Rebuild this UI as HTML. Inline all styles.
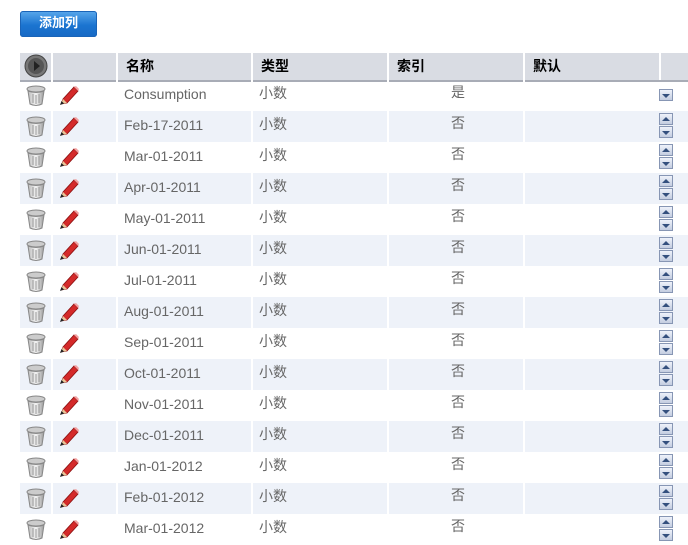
<!DOCTYPE html><html><head><meta charset="utf-8"><style>
body{margin:0;width:688px;height:545px;background:#fff;font-family:"Liberation Sans","Noto Sans CJK SC",sans-serif;position:relative;overflow:hidden}
.btn{position:absolute;left:20px;top:11px;width:77px;height:26px;border-radius:3px;background:linear-gradient(#5aa8ec,#1b74d0 55%,#1769c4);color:#fff;font-weight:bold;font-size:13px;text-align:center;line-height:24px;box-shadow:inset 0 0 0 1px #1a64b8}
.row{position:absolute;left:20px;width:668px;height:31px}
.c{position:absolute;top:0;height:100%;border-left:2px solid #fff;box-sizing:border-box;font-size:14px;color:#666;line-height:18px}
.hd{background:#d9dce3;border-bottom:2px solid #a8acb6;height:27px}
.hd .c{color:#000;font-weight:bold;padding:4px 0 0 8px}
.alt{background:#eef2f9}
.t{padding:5px 0 0 6px}
.ar{position:absolute;left:639px;width:14px;height:12px;background:linear-gradient(#eef2fa,#c4cde0);border:1px solid #8796b4;box-sizing:border-box}
.ar:after{content:"";position:absolute;left:2px;border-left:4px solid transparent;border-right:4px solid transparent}
.up:after{top:3px;border-bottom:4px solid #34507e}
.dn:after{top:4px;border-top:4px solid #34507e}
</style></head><body>
<div class="btn">添加列</div>
<div class="row hd" style="top:53px">
<div class="c" style="left:0;width:31px;border:none"><svg width="26" height="26" style="position:absolute;left:3px;top:0"><circle cx="13" cy="13" r="11" fill="#777" stroke="#444"/><circle cx="13" cy="13" r="8" fill="#555"/><path d="M11 8 L17 13 L11 18Z" fill="#222"/></svg></div>
<div class="c" style="left:31px;width:65px"></div>
<div class="c" style="left:96px;width:135px">名称</div>
<div class="c" style="left:231px;width:136px">类型</div>
<div class="c" style="left:367px;width:136px">索引</div>
<div class="c" style="left:503px;width:136px">默认</div>
<div class="c" style="left:639px;width:29px"></div>
</div>
<div id="rows"></div>
<script>
var n=["Consumption","Feb-17-2011","Mar-01-2011","Apr-01-2011","May-01-2011","Jun-01-2011","Jul-01-2011","Aug-01-2011","Sep-01-2011","Oct-01-2011","Nov-01-2011","Dec-01-2011","Jan-01-2012","Feb-01-2012","Mar-01-2012"];
var h="";
for(var i=0;i<15;i++){var y=80+i*31;
h+='<div class="row'+(i%2?' alt':'')+'" style="top:'+y+'px">'+
'<div class="c" style="left:0;width:31px;border:none"><svg width="22" height="24" style="position:absolute;left:5px;top:4px"><defs><linearGradient id="g'+i+'" x1="0" x2="1"><stop offset="0" stop-color="#bbb"/><stop offset=".5" stop-color="#f4f4f4"/><stop offset="1" stop-color="#999"/></linearGradient></defs><ellipse cx="11" cy="5" rx="9" ry="3" fill="#ccc" stroke="#888"/><path d="M3 7 L5 20 Q11 23 17 20 L19 7 Q11 10 3 7Z" fill="url(#g'+i+')" stroke="#888"/><path d="M8 10V19M11 11V20M14 10V19" stroke="#999"/></svg></div>'+
'<div class="c" style="left:31px;width:65px"><svg width="24" height="24" style="position:absolute;left:4px;top:4px"><path d="M4 20 L6 15 L17 3 L21 7 L10 19Z" fill="#d42a2a" stroke="#8a1010" stroke-width=".8"/><path d="M17 3 L21 7 L22 5 L19 2Z" fill="#f3a0a0"/><path d="M4 20 L6 15 L10 19Z" fill="#e8c89a"/><path d="M3 21 L4.5 17 L7 19.5Z" fill="#222"/></svg></div>'+
'<div class="c t" style="left:96px;width:135px">'+n[i]+'</div>'+
'<div class="c t" style="left:231px;width:136px;padding-top:4px">小数</div>'+
'<div class="c t" style="left:367px;width:136px;padding-left:62px;padding-top:3px">'+(i?'否':'是')+'</div>'+
'<div class="c" style="left:503px;width:136px"></div>'+
(i?'<div class="ar up" style="top:2px"></div>':'')+'<div class="ar dn" style="top:'+(i?15:9)+'px"></div>'+
'</div>';}
document.getElementById('rows').innerHTML=h;
</script>
</body></html>
